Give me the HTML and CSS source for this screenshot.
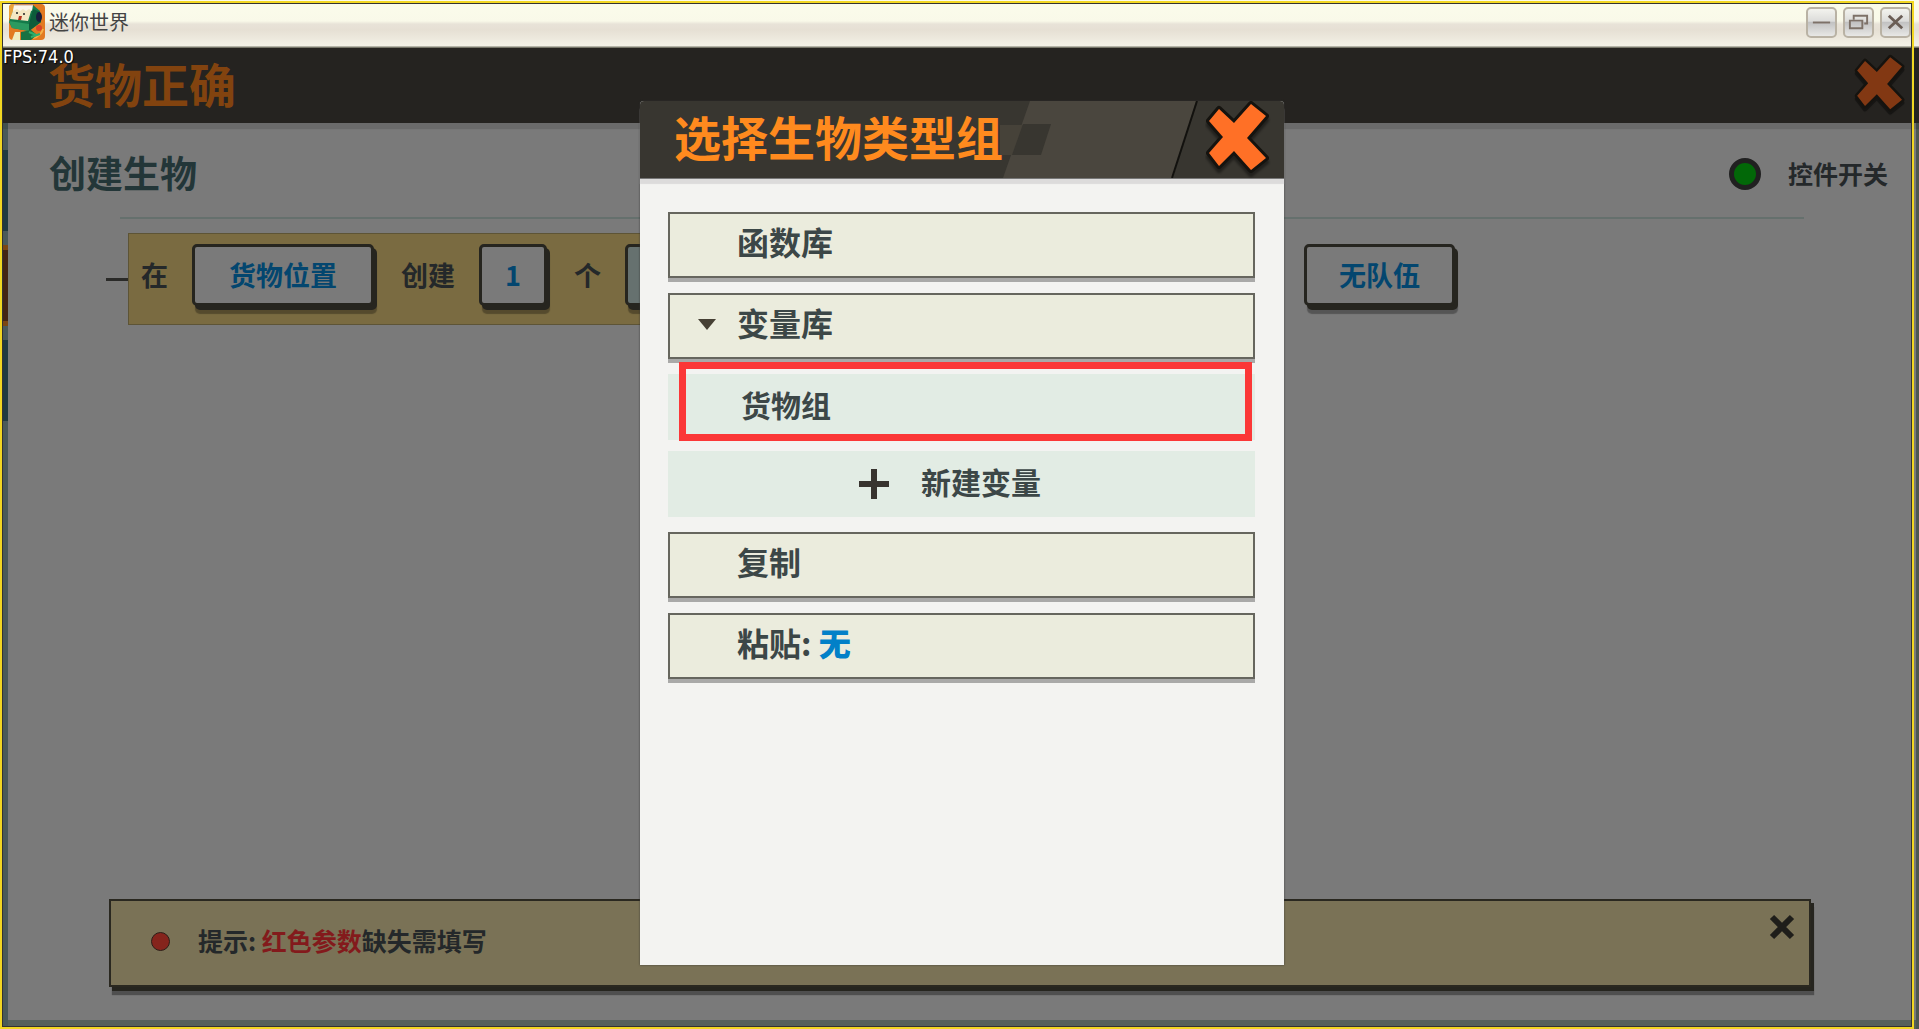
FILE: index.html
```html
<!DOCTYPE html>
<html lang="zh-CN">
<head>
    <meta charset="UTF-8">
    <meta name="viewport" content="width=device-width, initial-scale=1.0">
    <title>迷你世界</title>
    <link rel="stylesheet" href="styles.css">
</head>
<body>

    <div class="window">
        <div class="titlebar">
            <svg class="app-icon" viewBox="0 0 36 36">
                <rect width="36" height="36" rx="4" fill="#e27a22"/>
                <path d="M0 4 Q0 0 4 0 H7 L2 14 H0 Z" fill="#e9a13c"/>
                <path d="M24 34 q8 -2 10 -9" fill="none" stroke="#f6b04a" stroke-width="2"/>
                <path d="M6 2 L24 1 L31 7 L32 18 L20 27 L3 24 L0 18 Z" fill="#147a4a"/>
                <path d="M24 5 L31 8 L32 18 L20 27 L20 20 Z" fill="#0c5c3a"/>
                <path d="M0 17 L20 20 L20 27 L3 24 Z" fill="#2b9a60"/>
                <path d="M5 4 L23 4 L19 17 L1 15 Z" fill="#f4e7c4"/>
                <path d="M5 1 H24 L23 7 L20 5 L17 7 L14 5 L11 7 L8 5 L4 7 Z" fill="#fbf6ee"/>
                <path d="M5 1 H24" stroke="#c9a79a" stroke-width="1"/>
                <circle cx="8" cy="9" r="1" fill="#222"/>
                <circle cx="15" cy="10" r="1" fill="#222"/>
                <path d="M10 12 H13 L12 16 H9 Z" fill="#b8321e"/>
                <ellipse cx="30" cy="13" rx="3" ry="5" fill="#171e3c"/>
                <circle cx="30" cy="24" r="3" fill="#d8432a"/>
                <path d="M6 28 L11 28 L11 36 H3 Z" fill="#f0ecc0"/>
                <path d="M12 28 L22 26 L28 31 L22 36 H12 Z" fill="#177243"/>
                <path d="M20 28 L27 31 M22 33 L31 30" stroke="#2fae6c" stroke-width="2"/>
            </svg>
            <span class="app-name">迷你世界</span>
            <button class="win-btn" aria-label="最小化">
                <svg viewBox="0 0 24 24"><path d="M3 12 H21" stroke="#7d7168" stroke-width="2"/></svg>
            </button>
            <button class="win-btn" aria-label="还原">
                <svg viewBox="0 0 24 24" fill="none" stroke="#7d7168" stroke-width="2"><path d="M7 9 V5 H21 V13 H18"/><path d="M3 10 H16 V18 H3 Z"/></svg>
            </button>
            <button class="win-btn" aria-label="关闭">
                <svg viewBox="0 0 24 24"><path d="M5 5 L19 18 M19 5 L5 18" stroke="#6a5d55" stroke-width="3"/></svg>
            </button>
        </div>

        <header class="topbar">
            <span class="fps">FPS:74.0</span>
            <h1>货物正确</h1>
            <button class="close close-dim" aria-label="关闭">
                <svg viewBox="0 0 66 80"><path d="M14 9 L4 21 L18 37 L4 53 L14 66 L29 51 L46 70 L61 58 L42 38 L61 16 L46 4 L29 23 Z"/></svg>
            </button>
        </header>

        <main class="stage">
            <div class="side-tabs"></div>
            <section class="panel">
                <div class="panel-head">
                    <h2>创建生物</h2>
                    <input type="checkbox" id="toggle" class="toggle" checked>
                    <label for="toggle">控件开关</label>
                </div>
                <hr>
                <div class="action-row">
                    <span class="dash"></span>
                    <div class="action">
                        <span>在</span>
                        <button class="slot">货物位置</button>
                        <span>创建</span>
                        <button class="slot slot-num">1</button>
                        <span>个</span>
                        <button class="slot slot-type" aria-label="生物类型"></button>
                    </div>
                    <button class="slot slot-team">无队伍</button>
                </div>

                <div class="notice">
                    <span class="dot"></span>
                    <p>提示: <em>红色参数</em>缺失需填写</p>
                    <button class="notice-close" aria-label="关闭提示">
                        <svg viewBox="0 0 26 26"><path d="M3 3 L23 23 M23 3 L3 23" stroke="#1f1e1a" stroke-width="6"/></svg>
                    </button>
                </div>
            </section>
        </main>
    </div>

    <div class="layer">
        <div class="dialog" role="dialog" aria-labelledby="dialog-title">
            <div class="dialog-head">
                <svg class="stripes" viewBox="0 0 284 77">
                    <path d="M30 0 H196 L173 77 H3 Z" fill="#4a463e"/>
                    <path d="M0 24 H24 L15 54 H0 Z" fill="#464239"/>
                    <path d="M23 23 H51 L41 54 H12 Z" fill="#383630"/>
                    <path d="M197 0 L172 77" stroke="#12110e" stroke-width="2"/>
                </svg>
                <h2 id="dialog-title">选择生物类型组</h2>
                <button class="close" aria-label="关闭">
                    <svg viewBox="0 0 66 80"><path d="M14 9 L4 21 L18 37 L4 53 L14 66 L29 51 L46 70 L61 58 L42 38 L61 16 L46 4 L29 23 Z"/></svg>
                </button>
            </div>
            <div class="list">
                <button class="item">函数库</button>
                <button class="item item-open">变量库</button>
                <div class="sub-list">
                    <button class="sub-item marked">货物组</button>
                    <button class="sub-item add">
                        <svg viewBox="0 0 30 30"><path d="M15 0 V30 M0 15 H30" stroke="#38342f" stroke-width="6"/></svg>
                        <span>新建变量</span>
                    </button>
                </div>
                <button class="item">复制</button>
                <button class="item">粘贴: <b>无</b></button>
            </div>
        </div>
    </div>

    <div class="frame"></div>

</body>
</html>
```

FILE: styles.css
```css
* {
    margin: 0;
    padding: 0;
    box-sizing: border-box;
}

body {
    font-family: "Noto Sans CJK SC", sans-serif;
    font-weight: bold;
    position: relative;
    min-height: 100vh;
    background: #7a7a7a;
}

button {
    font: inherit;
    color: inherit;
    border: none;
    background: none;
    cursor: pointer;
}

svg {
    display: block;
}

.window {
    display: flex;
    flex-direction: column;
    min-height: 100vh;
}

/* title bar */
.titlebar {
    display: flex;
    align-items: center;
    height: 48px;
    padding: 0 8px 4px 9px;
    background: linear-gradient(#fbfceb 0, #f9f9e9 21px, #e8e3d8 24px, #e6e0d4 30px, #f3f1e6 46px, #77776a 47px);
}

.app-icon {
    width: 36px;
    height: 36px;
    margin-right: 4px;
}

.app-name {
    flex: 1;
    font-size: 20px;
    font-weight: normal;
    line-height: 24px;
    color: #444;
}

.win-btn {
    width: 31px;
    height: 31px;
    margin-left: 6px;
    padding: 2px;
    border: 2px solid #b9b2a4;
    border-radius: 5px;
    background: linear-gradient(#f3f3ee, #dcdcda 45%, #c2c2c2 50%, #e8e8e6);
}

/* top bar */
.topbar {
    position: relative;
    z-index: 1;
    display: flex;
    align-items: center;
    justify-content: space-between;
    height: 75px;
    padding: 0 13px 0 48px;
    background: #252320;
    box-shadow: 0 6px 1px rgba(0, 0, 0, 0.12);
}

.topbar h1 {
    padding-bottom: 6px;
    font-size: 47px;
    line-height: 56px;
    color: #82430f;
}

.fps {
    position: absolute;
    left: 3px;
    top: 0;
    font-family: "DejaVu Sans Condensed", "DejaVu Sans", sans-serif;
    font-weight: normal;
    font-size: 18px;
    line-height: 18px;
    color: #fff;
    text-shadow: 1px 1px 1px #000;
}

.close {
    width: 66px;
    height: 80px;
}

.close path {
    fill: #ff7026;
    stroke: #15130f;
    stroke-width: 6;
    stroke-linejoin: round;
    paint-order: stroke;
    filter: drop-shadow(0 4px 1px rgba(0, 0, 0, 0.4));
}

.close-dim {
    width: 52px;
    height: 63px;
}

.close-dim path {
    fill: #823813;
}

/* stage */
.stage {
    flex: 1;
    display: flex;
    border-right: 3px solid #4b5751;
}

.side-tabs {
    width: 8px;
    background: linear-gradient(#4a5a59 27px, #203a40 27px, #203a40 108px, #4a5a59 108px, #4a5a59 122px, #7b4713 122px, #7b4713 127px, #442413 127px, #442413 198px, #7b4713 198px, #7b4713 203px, #4a5a59 203px, #4a5a59 217px, #203a40 217px, #203a40 298px, #4a5a59 298px);
}

.panel {
    flex: 1;
    display: flex;
    flex-direction: column;
    border-bottom: 9px solid #56615b;
}

.panel-head {
    display: flex;
    align-items: center;
    height: 94px;
    padding: 8px 28px 0 41px;
    color: #24282a;
}

.panel-head h2 {
    flex: 1;
    padding-bottom: 4px;
    font-size: 37px;
    line-height: 48px;
    color: #233638;
}

.panel-head label {
    padding-bottom: 2px;
    font-size: 25px;
    line-height: 32px;
}

.toggle {
    appearance: none;
    width: 32px;
    height: 32px;
    margin-right: 27px;
    border: 5px solid #202020;
    border-radius: 50%;
    background: #026808;
}

hr {
    height: 2px;
    margin: 0 112px;
    border: none;
    background: #65706d;
}

.action-row {
    display: flex;
    align-items: center;
    margin: 14px 0 0 98px;
    font-size: 27px;
    line-height: 32px;
    color: #24282a;
}

.dash {
    width: 22px;
    height: 3px;
    background: #2a2a28;
}

.action {
    flex: 0 1 1100px;
    display: flex;
    align-items: center;
    gap: 24px;
    height: 92px;
    margin-right: 76px;
    padding: 0 20px 9px 12px;
    border: 1px solid #5d5436;
    background: #7a6b41;
}

.slot {
    width: 182px;
    height: 62px;
    margin-right: 3px;
    border: 3px solid #26251f;
    border-radius: 5px;
    background: #7a7a7a;
    box-shadow: 3px 4px 0 #26251f, 3px 8px 1px rgba(0, 0, 0, 0.3);
    color: #03466f;
}

.slot-num {
    width: 68px;
}

.slot-type {
    flex: 1;
    background: #66716f;
}

.slot-team {
    width: 151px;
    margin-bottom: 9px;
}

/* bottom notice */
.notice {
    display: flex;
    align-items: center;
    height: 88px;
    margin: auto 105px 33px 101px;
    padding: 0 14px 4px 40px;
    border: 2px solid #2a2820;
    background: #7a7256;
    box-shadow: 3px 4px 0 #26251f, 3px 8px 1px rgba(0, 0, 0, 0.35);
    font-size: 25px;
    line-height: 32px;
    color: #24282a;
}

.notice p {
    flex: 1;
    padding-bottom: 2px;
}

.notice em {
    font-style: normal;
    color: #831a1c;
}

.dot {
    width: 19px;
    height: 19px;
    margin-right: 28px;
    border: 1px solid #2c1d17;
    border-radius: 50%;
    background: #85241c;
}

.notice-close {
    align-self: flex-start;
    width: 26px;
    height: 26px;
    margin-top: 13px;
}

/* dialog */
.layer {
    position: absolute;
    inset: 0;
    z-index: 2;
    display: flex;
    justify-content: center;
    padding: 101px 0 64px 5px;
}

.dialog {
    width: 644px;
    border-radius: 4px 4px 0 0;
    background: #f3f3f1;
    box-shadow: 0 0 2px #333;
}

.dialog-head {
    position: relative;
    display: flex;
    align-items: center;
    justify-content: space-between;
    height: 77px;
    padding: 0 13px 0 34px;
    border-radius: 4px 4px 0 0;
    background: #383630;
    box-shadow: 0 1px 0 #777, 0 6px 1px #dcdbdb;
}

.dialog-head h2 {
    position: relative;
    padding-bottom: 8px;
    font-size: 47px;
    line-height: 56px;
    color: #ff8a1e;
}

.dialog-head .close {
    position: relative;
}

.stripes {
    position: absolute;
    right: 0;
    top: 0;
    width: 284px;
    height: 77px;
}

.list {
    display: flex;
    flex-direction: column;
    gap: 15px;
    padding: 34px 29px 0 28px;
    color: #3c4747;
}

.item {
    height: 66px;
    padding: 0 0 8px 67px;
    border: 2px solid #66665e;
    background: #ebecdd;
    box-shadow: 0 4px 0 #a9a9a8;
    font-size: 32px;
    line-height: 40px;
    text-align: left;
}

.item b {
    color: #0280c8;
}

.item-open {
    display: flex;
    align-items: center;
    padding-left: 28px;
}

.item-open::before {
    content: "";
    border: 9px solid transparent;
    border-top: 11px solid #464034;
    border-bottom: none;
    margin: 4px 21px 0 0;
}

.sub-list {
    display: flex;
    flex-direction: column;
    gap: 11px;
}

.sub-item {
    position: relative;
    height: 66px;
    padding: 0 0 6px 73px;
    background: #e2ece4;
    font-size: 30px;
    line-height: 40px;
    text-align: left;
}

.add {
    display: flex;
    align-items: center;
    justify-content: center;
    gap: 32px;
    padding: 0 23px 0 0;
}

.add svg {
    width: 30px;
    height: 30px;
}

.add span {
    padding-bottom: 6px;
}

.marked::after {
    content: "";
    position: absolute;
    inset: -12px 3px -1px 11px;
    border: 7px solid #fb3737;
}

/* capture outline around the whole window */
.frame {
    position: absolute;
    inset: 1px 5px 0 0;
    z-index: 3;
    border: 2px solid #f2d722;
    outline: 1px solid #333;
    outline-offset: -3px;
    pointer-events: none;
}
```
